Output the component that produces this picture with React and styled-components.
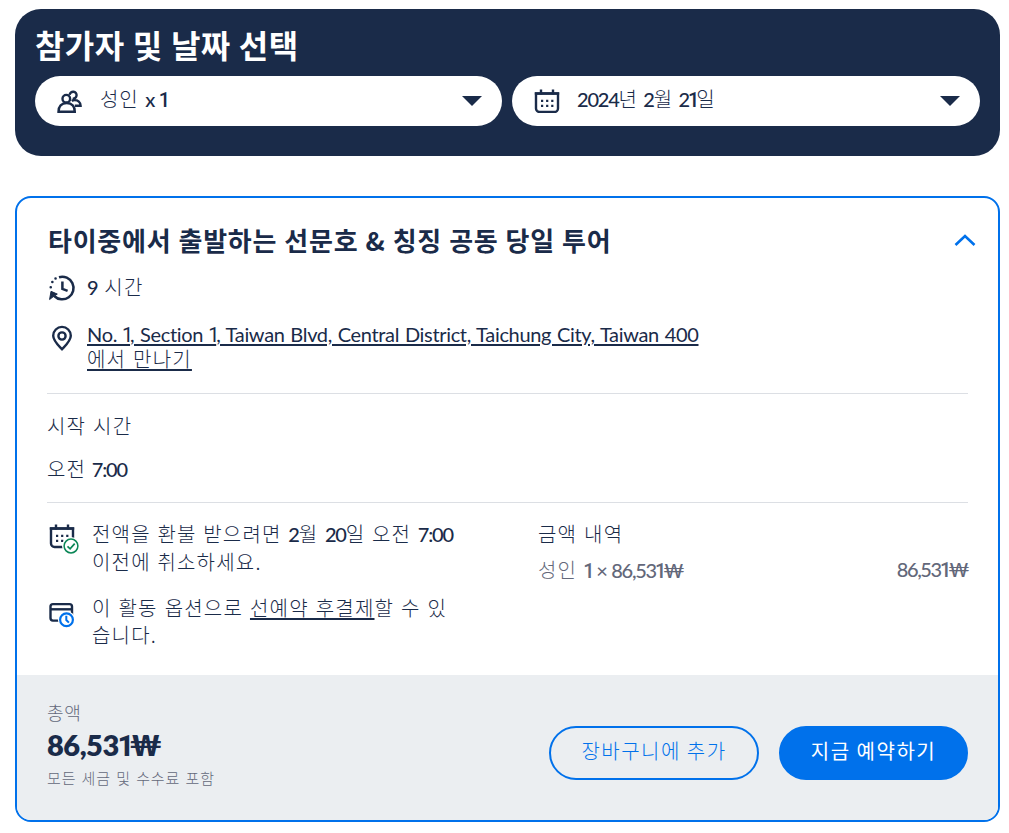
import { useState } from "react";
import styled, { createGlobalStyle } from "styled-components";

const navy = "#1a2b49";
const blue = "#0071eb";
const gray = "#63687a";

const CalendarShape = () => (
  <>
    <path d="M2 4.500h22v15a3.500 3.500 0 0 1-3.500 3.500h-15A3.500 3.500 0 0 1 2 19.500z" />
    <path d="M7 0.500v5M19 0.500v5" />
    <path d="M0.800 4.500h24.400" />
    <path d="M7 11.800h12.500M7 16.800h12.500" strokeDasharray="2.200 2.900" strokeWidth="2.200" />
  </>
);

const App = () => {
  const [open, setOpen] = useState(true);

  return (
    <Page>
      <GlobalStyle />
      <SearchPanel>
        <SearchTitle>참가자 및 날짜 선택</SearchTitle>
        <Fields>
          <Field>
            <FieldIcon>
              <svg width="26" height="25" viewBox="0 0 26 25" fill="none" stroke={navy} strokeWidth="2.400">
                <circle cx="9.300" cy="9.700" r="3.800" />
                <path d="M1.500 22.700c0-5.200 3-8.700 8.200-8.700s8.100 3.500 8.100 8.700z" />
                <path d="M12.600 5.800a3.500 3.500 0 1 1 3 3.900M14.800 12c.9-.7 1.800-1 2.700-1 3.400 0 6 2.500 6.100 5.700h-5.800" />
              </svg>
            </FieldIcon>
            <FieldText $wordSpacing="1.500px">
              성인 <Latin $medium $spacing="-0.8px">x <One>1</One></Latin>
            </FieldText>
            <Caret />
          </Field>
          <Field>
            <FieldIcon>
              <svg width="26" height="24" viewBox="0 0 26 24" fill="none" stroke={navy} strokeWidth="2.400">
                <CalendarShape />
              </svg>
            </FieldIcon>
            <FieldText>
              <Latin $medium>2024</Latin>년 <Latin $medium>2</Latin>월 <Latin $medium>2<One>1</One></Latin>일
            </FieldText>
            <Caret />
          </Field>
        </Fields>
      </SearchPanel>

      <Card>
        <CardBody>
          <CardHeader>
            <CardTitle>타이중에서 출발하는 선문호 &amp; 칭징 공동 당일 투어</CardTitle>
            <ToggleButton onClick={() => setOpen(!open)} aria-label="toggle">
              <svg width="22" height="13" viewBox="0 0 22 13" fill="none" stroke={blue} strokeWidth="2.600">
                <path d="M1.500 11 11 2l9.500 9" />
              </svg>
            </ToggleButton>
          </CardHeader>

          <Duration>
            <svg width="28" height="28" viewBox="0 0 28 28" fill="none" stroke={navy} strokeWidth="2.500">
              <path d="M10 3.200A11.300 11.300 0 1 1 5.200 22" />
              <path d="M13.400 7.500v7.300l5.200 2" />
              <path d="M6.500 4.400h.1M3.300 8h.1M1.700 13.200h.1" strokeLinecap="round" />
              <path d="M0.600 25.500 2 17.300l6.300 2.800-3.300 2z" fill={navy} strokeWidth="1" />
            </svg>
            <span><Latin $medium>9</Latin> 시간</span>
          </Duration>

          <Meeting>
            <svg width="28" height="27" viewBox="0 0 28 27" fill="none" stroke={navy} strokeWidth="2.400">
              <path d="M14 24.300C9.500 19.500 5.200 15.500 5.200 10.700a8.800 8.800 0 0 1 17.600 0c0 4.800-4.300 8.800-8.800 13.600z" />
              <circle cx="14" cy="11" r="3.600" />
            </svg>
            <Address>
              <Latin $spacing="-0.33px">
                No. <One>1</One>, Section <One>1</One>, Taiwan Blvd, Central District, Taichung City, Taiwan 400
              </Latin>
              <br />
              에서 만나기
            </Address>
          </Meeting>

          <StartTime>
            <div>시작 시간</div>
            <Time>오전 <Latin $medium>7:00</Latin></Time>
          </StartTime>

          <Details>
            <Policies>
              <Policy>
                <svg width="30" height="31" viewBox="0 0 30 31" fill="none" stroke={navy} strokeWidth="2.400">
                  <CalendarShape />
                  <circle cx="22" cy="22" r="9" fill="#fff" stroke="none" />
                  <circle cx="22" cy="22" r="6.900" stroke="#0a8656" strokeWidth="1.500" />
                  <path d="m18.500 22.300 2.600 2.500 4.600-5.200" stroke="#0a8656" strokeWidth="1.700" />
                </svg>
                <PolicyText $wordSpacing="1px">
                  전액을 환불 받으려면 <Latin $medium>2</Latin>월 <Latin $medium>20</Latin>일 오전 <Latin $medium>7:00</Latin>
                  <br />
                  이전에 취소하세요.
                </PolicyText>
              </Policy>
              <Policy>
                <svg width="30" height="31" viewBox="0 0 30 31" fill="none" stroke={navy} strokeWidth="2.400">
                  <rect x="1.500" y="6.100" width="21.500" height="16.500" rx="2.500" />
                  <path d="M1 11.300h22" />
                  <circle cx="17.500" cy="21.700" r="8.600" fill="#fff" stroke="none" />
                  <circle cx="17.500" cy="21.700" r="6.400" stroke={blue} strokeWidth="2.200" />
                  <path d="M17.300 17.700v4.300l2.600 2.600" stroke={blue} strokeWidth="2" />
                </svg>
                <PolicyText>
                  이 활동 옵션으로 <u>선예약 후결제</u>할 수 있
                  <br />
                  습니다.
                </PolicyText>
              </Policy>
            </Policies>
            <Breakdown>
              <div>금액 내역</div>
              <PriceRow>
                <span>
                  성인 <Latin $medium $spacing="-1.300px"><One>1</One> × 86,53<One>1</One>₩</Latin>
                </span>
                <Latin $medium $spacing="-1.400px">86,53<One>1</One>₩</Latin>
              </PriceRow>
            </Breakdown>
          </Details>
        </CardBody>

        <CardFooter>
          <Total>
            <TotalLabel>총액</TotalLabel>
            <TotalPrice>86,53<One>1</One>₩</TotalPrice>
            <TaxNote>모든 세금 및 수수료 포함</TaxNote>
          </Total>
          <Buttons>
            <ActionButton $width="210px">장바구니에 추가</ActionButton>
            <ActionButton $width="189px" $primary>지금 예약하기</ActionButton>
          </Buttons>
        </CardFooter>
      </Card>
    </Page>
  );
};

export default App;

// Styled Components
const GlobalStyle = createGlobalStyle`
  * {
    box-sizing: border-box;
  }
  body {
    margin: 0;
    background-color: #ffffff;
  }
  svg {
    display: block;
    flex-shrink: 0;
  }
  h1, h2, p {
    margin: 0;
  }
`;

const Page = styled.div`
  display: flex;
  flex-direction: column;
  gap: 40px;
  padding: 9px 9px 11px 15px;
  color: ${navy};
  font-family: "Noto Sans CJK KR", sans-serif;
  font-size: 20px;
  font-weight: 300;
  letter-spacing: 1.2px;
  word-spacing: 1.3px;
`;

const Latin = styled.span`
  font-family: Lato, "Noto Sans CJK KR", sans-serif;
  font-weight: ${({ $medium }) => ($medium ? 500 : 400)};
  letter-spacing: ${({ $spacing }) => $spacing || "-1.2px"};
  word-spacing: 1px;
`;

// narrow numeral one without a foot
const One = styled.span`
  margin-left: -0.04em;
  font-family: Roboto, sans-serif;
  letter-spacing: -0.16em;
`;

const SearchPanel = styled.section`
  height: 147px;
  padding: 12px 20px 0;
  background-color: ${navy};
  border-radius: 26px;
`;

const SearchTitle = styled.h1`
  height: 55px;
  color: #ffffff;
  font-size: 32px;
  font-weight: 700;
  line-height: 46px;
  letter-spacing: 0.4px;
  word-spacing: 0.6px;
`;

const Fields = styled.div`
  display: grid;
  grid-template-columns: 467px 468px;
  gap: 10px;
`;

const Field = styled.div`
  display: flex;
  align-items: center;
  height: 50px;
  padding: 0 20px 0 22px;
  background-color: #ffffff;
  border-radius: 25px;
`;

const FieldIcon = styled.span`
  width: 43px;
`;

const FieldText = styled.span`
  flex: 1;
  line-height: 46px;
  padding-bottom: 4px;
  letter-spacing: 0.8px;
  word-spacing: ${({ $wordSpacing }) => $wordSpacing || "0.3px"};
`;

const Caret = styled.span`
  border: 10px solid transparent;
  border-top-color: ${navy};
  border-bottom: 0;
`;

const Card = styled.section`
  height: 626px;
  overflow: hidden;
  border: 2px solid ${blue};
  border-radius: 16px;
`;

const CardBody = styled.div`
  height: 477px;
  padding: 24px 30px 0;
`;

const CardHeader = styled.header`
  display: flex;
  justify-content: space-between;
  height: 50px;
`;

const CardTitle = styled.h2`
  padding-left: 1px;
  font-size: 26px;
  font-weight: 700;
  line-height: 36px;
  letter-spacing: 0.75px;
  word-spacing: 0.5px;
`;

const ToggleButton = styled.button`
  height: 36px;
  padding: 0;
  margin-right: -8px;
  background: none;
  border: none;
`;

const Duration = styled.div`
  display: flex;
  align-items: center;
  gap: 10px;
  height: 32px;
  padding-left: 2px;
  line-height: 28px;

  span {
    margin-top: -2px;
  }
`;

const Meeting = styled.div`
  display: flex;
  gap: 11px;
  height: 90px;
  padding-top: 18px;
  border-bottom: 1px solid #dcdfe4;

  svg {
    margin: 3px 0 0 1px;
  }
`;

const Address = styled.p`
  line-height: 24px;
  text-decoration: underline;
  text-decoration-thickness: 2px;
  text-underline-offset: 2px;
`;

const StartTime = styled.div`
  display: flex;
  flex-direction: column;
  gap: 15px;
  height: 109px;
  padding-top: 18px;
  line-height: 28px;
  border-bottom: 1px solid #dcdfe4;
`;

const Time = styled.div`
  word-spacing: 0;
`;

const Details = styled.div`
  display: grid;
  grid-template-columns: 461px 430px;
  column-gap: 30px;
  padding-top: 17px;
`;

const Policies = styled.div`
  display: flex;
  flex-direction: column;
  gap: 18px;
`;

const Policy = styled.div`
  display: flex;
  gap: 13px;
  padding-left: 2px;
  line-height: 27.300px;

  svg {
    margin-top: 4px;
  }
`;

const PolicyText = styled.p`
  white-space: nowrap;
  word-spacing: ${({ $wordSpacing }) => $wordSpacing || "1.3px"};

  u {
    text-decoration-thickness: 2px;
    text-underline-offset: 2px;
  }
`;

const Breakdown = styled.div`
  display: flex;
  flex-direction: column;
  gap: 9px;
  line-height: 27px;
`;

const PriceRow = styled.div`
  display: flex;
  justify-content: space-between;
  color: ${gray};
`;

const CardFooter = styled.footer`
  display: flex;
  justify-content: space-between;
  height: 145px;
  padding: 24px 30px 0;
  background-color: #ebeef1;
`;

const Total = styled.div`
  display: flex;
  flex-direction: column;
`;

const TotalLabel = styled.span`
  height: 29px;
  color: ${gray};
  font-size: 18px;
  line-height: 26px;
  letter-spacing: 0.8px;
`;

const TotalPrice = styled.strong`
  height: 37px;
  font-family: Lato, "Noto Sans CJK KR", sans-serif;
  font-size: 29px;
  font-weight: 800;
  line-height: 34px;
  letter-spacing: -0.5px;
`;

const TaxNote = styled.span`
  color: ${gray};
  font-size: 15px;
  line-height: 25px;
  letter-spacing: 0.9px;
  word-spacing: 1px;
`;

const Buttons = styled.div`
  display: flex;
  gap: 20px;
  padding-top: 27px;
`;

const ActionButton = styled.button`
  width: ${({ $width }) => $width};
  height: 54px;
  padding: 0 0 6px;
  color: ${({ $primary }) => ($primary ? "#ffffff" : blue)};
  font-family: inherit;
  font-size: 20px;
  font-weight: ${({ $primary }) => ($primary ? 400 : 300)};
  letter-spacing: 1.5px;
  background-color: ${({ $primary }) => ($primary ? blue : "transparent")};
  border: 2px solid ${blue};
  border-radius: 27px;
`;
